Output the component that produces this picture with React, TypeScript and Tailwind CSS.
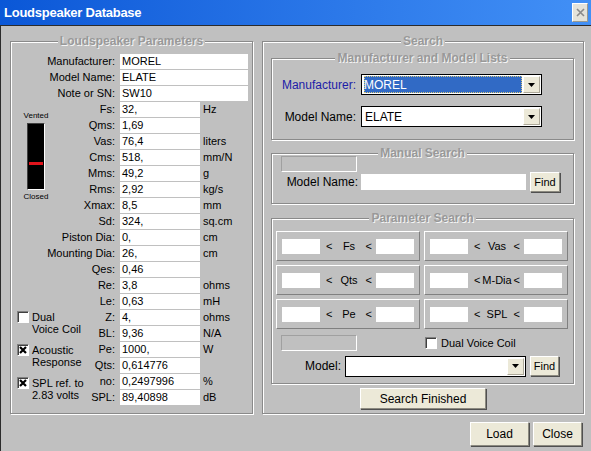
import React from "react";

const params: [string, string, string][] = [
  ["Fs:", "32,", "Hz"],
  ["Qms:", "1,69", ""],
  ["Vas:", "76,4", "liters"],
  ["Cms:", "518,", "mm/N"],
  ["Mms:", "49,2", "g"],
  ["Rms:", "2,92", "kg/s"],
  ["Xmax:", "8,5", "mm"],
  ["Sd:", "324,", "sq.cm"],
  ["Piston Dia:", "0,", "cm"],
  ["Mounting Dia:", "26,", "cm"],
  ["Qes:", "0,46", ""],
  ["Re:", "3,8", "ohms"],
  ["Le:", "0,63", "mH"],
  ["Z:", "4,", "ohms"],
  ["BL:", "9,36", "N/A"],
  ["Pe:", "1000,", "W"],
  ["Qts:", "0,614776", ""],
  ["no:", "0,2497996", "%"],
  ["SPL:", "89,40898", "dB"],
];

const topFields: [string, string][] = [
  ["Manufacturer:", "MOREL"],
  ["Model Name:", "ELATE"],
  ["Note or SN:", "SW10"],
];

function Group({
  title,
  className,
  children,
}: {
  title: string;
  className: string;
  children?: React.ReactNode;
}) {
  return (
    <div
      className={`relative border border-[#8a8a8a] shadow-[1px_1px_0_#fff,inset_1px_1px_0_#fff] ${className}`}
    >
      {/* legend sits on the top border */}
      <div className="absolute -top-[8px] left-0 right-0 flex justify-center">
        <span className="bg-[#c0c0c0] px-[2px] text-[12px] font-bold leading-[14px] text-[#999999] [text-shadow:1px_1px_0_#f4f4f4]">
          {title}
        </span>
      </div>
      {children}
    </div>
  );
}

function Btn({
  children,
  className,
}: {
  children: React.ReactNode;
  className: string;
}) {
  return (
    <button
      className={`flex items-center justify-center border border-t-white border-l-white border-b-[#8c8a80] border-r-[#8c8a80] bg-[#ece9d8] text-black shadow-[1px_1px_0_#505050] ${className}`}
    >
      {children}
    </button>
  );
}

function Check({ checked }: { checked?: boolean }) {
  return (
    <div className="flex h-[12px] w-[12px] shrink-0 items-center justify-center border border-t-[#808080] border-l-[#808080] border-b-white border-r-white bg-white shadow-[inset_1px_1px_0_#404040]">
      {checked && (
        <svg width="8" height="8" viewBox="0 0 8 8">
          <path d="M1 1 L7 7 M7 1 L1 7" stroke="#000" strokeWidth="2.2" />
        </svg>
      )}
    </div>
  );
}

function Arrow() {
  return (
    <div className="flex w-[17px] items-center justify-center border border-t-white border-l-white border-b-[#aca899] border-r-[#aca899] bg-[#ece9d8]">
      <svg width="7" height="4" viewBox="0 0 7 4">
        <path d="M0 0 H7 L3.5 4 Z" fill="#000" />
      </svg>
    </div>
  );
}

function Combo({ value, selected }: { value?: string; selected?: boolean }) {
  return (
    <div className="flex h-[21px] w-[181px] border border-black bg-white py-[1px] pl-[2px] pr-[1px]">
      {selected ? (
        <div className="mr-[1px] flex flex-1 items-center bg-[#316ac5] text-white outline-1 -outline-offset-1 outline-dotted outline-[#d9c77a]">
          {value}
        </div>
      ) : (
        <div className="flex flex-1 items-center pl-[1px]">{value}</div>
      )}
      <Arrow />
    </div>
  );
}

function Range({ label }: { label: string }) {
  return (
    <div className="flex h-[30px] w-[144px] items-center border border-t-white border-l-white border-b-[#808080] border-r-[#808080] px-[5px] text-[11px]">
      <div className="h-[15px] w-[38px] bg-white" />
      <div className="flex flex-1 justify-between pl-[6px] pr-[4px]">
        <span>&lt;</span>
        <span>{label}</span>
        <span>&lt;</span>
      </div>
      <div className="h-[15px] w-[38px] bg-white" />
    </div>
  );
}

function Sunken({ className }: { className: string }) {
  return (
    <div
      className={`h-[16px] w-[76px] border border-t-[#a0a0a0] border-l-[#a0a0a0] border-b-white border-r-white ${className}`}
    />
  );
}

export default function App() {
  return (
    <div className="h-[451px] w-[591px] overflow-hidden bg-[#c0c0c0] font-['Liberation_Sans',Arial,sans-serif] text-black">
      {/* Title bar */}
      <div className="flex h-[26px] items-center border-b border-[#2b2b2b] bg-linear-to-r from-[#0a57d7] to-[#4290f6] pl-[4px] pr-[3px]">
        <div className="text-[13px] font-bold tracking-[-0.25px] text-white">
          Loudspeaker Database
        </div>
        <div className="ml-auto flex h-[19px] w-[16px] items-center justify-center border border-t-white border-l-white border-b-[#9a9a90] border-r-[#9a9a90] bg-[#e4e3da]">
          <svg width="9" height="9" viewBox="0 0 9 9">
            <path d="M1 1 L8 8 M8 1 L1 8" stroke="#8a8a8a" strokeWidth="1.6" />
          </svg>
        </div>
      </div>

      {/* Body */}
      <div className="flex h-[425px] flex-col border-l border-[#2b2b2b] pl-[9px] pr-[7px] pt-[15px]">
        <div className="flex">
          {/* Loudspeaker Parameters */}
          <Group title="Loudspeaker Parameters" className="h-[373px] w-[243px]">
            <div className="flex flex-col pt-[12px] text-[11px]">
              {topFields.map(([label, value]) => (
                <div className="flex h-[16px]" key={label}>
                  <div className="flex w-[109px] justify-end whitespace-nowrap pr-[5px] leading-[15px]">
                    {label}
                  </div>
                  <div className="h-[15px] w-[128px] bg-white pl-[2px] leading-[15px]">
                    {value}
                  </div>
                </div>
              ))}

              <div className="flex">
                {/* vented indicator + checkboxes */}
                <div className="flex w-[42px] flex-col">
                  <div className="ml-[8px] mt-[9px] flex w-[34px] flex-col items-center">
                    <div className="text-[8px] leading-[10px]">Vented</div>
                    <div className="mt-[2px] h-[67px] w-[18px] border border-t-[#404040] border-l-[#404040] border-b-white border-r-white bg-black pt-[38px]">
                      <div className="mx-[1px] h-[3px] bg-[#e0141c]" />
                    </div>
                    <div className="mt-[2px] text-[8px] leading-[10px]">Closed</div>
                  </div>

                  <div className="mb-[5px] ml-[6px] mt-auto flex flex-col gap-[9px] whitespace-nowrap leading-[12px]">
                    <div className="flex items-start gap-[3px]">
                      <Check />
                      <div>
                        Dual
                        <br />
                        Voice Coil
                      </div>
                    </div>
                    <div className="flex items-start gap-[3px]">
                      <Check checked />
                      <div>
                        Acoustic
                        <br />
                        Response
                      </div>
                    </div>
                    <div className="flex items-start gap-[3px]">
                      <Check checked />
                      <div>
                        SPL ref. to
                        <br />
                        2.83 volts
                      </div>
                    </div>
                  </div>
                </div>

                {/* parameter rows */}
                <div className="flex flex-col">
                  {params.map(([label, value, unit]) => (
                    <div className="flex h-[16px]" key={label}>
                      <div className="flex w-[67px] justify-end whitespace-nowrap pr-[5px] leading-[15px]">
                        {label}
                      </div>
                      <div className="h-[15px] w-[80px] bg-white pl-[2px] leading-[15px]">
                        {value}
                      </div>
                      <div className="pl-[3px] leading-[15px]">{unit}</div>
                    </div>
                  ))}
                </div>
              </div>
            </div>
          </Group>

          {/* Search */}
          <Group title="Search" className="ml-[9px] h-[373px] w-[322px]">
            <div className="flex flex-col px-[8px] pt-[16px] text-[12px]">
              <Group title="Manufacturer and Model Lists" className="h-[82px] w-[303px]">
                <div className="flex flex-col gap-[11px] pt-[15px]">
                  <div className="flex items-center">
                    <div className="w-[89px] pr-[5px] text-right text-[#1c1ca8]">
                      Manufacturer:
                    </div>
                    <Combo value="MOREL" selected />
                  </div>
                  <div className="flex items-center">
                    <div className="w-[89px] pr-[5px] text-right">Model Name:</div>
                    <Combo value="ELATE" />
                  </div>
                </div>
              </Group>

              <Group title="Manual Search" className="mt-[13px] h-[51px] w-[303px]">
                <div className="flex flex-col pt-[2px]">
                  <Sunken className="ml-[9px]" />
                  <div className="flex items-center">
                    <div className="w-[89px] pr-[3px] text-right">Model Name:</div>
                    <div className="h-[16px] w-[165px] bg-white" />
                    <Btn className="ml-[4px] h-[20px] w-[30px] text-[11px]">Find</Btn>
                  </div>
                </div>
              </Group>

              <Group title="Parameter Search" className="mt-[14px] h-[166px] w-[303px]">
                <div className="flex flex-col pl-[4px] pt-[12px]">
                  <div className="grid grid-cols-[144px_144px] gap-[4px]">
                    <Range label="Fs" />
                    <Range label="Vas" />
                    <Range label="Qts" />
                    <Range label="M-Dia" />
                    <Range label="Pe" />
                    <Range label="SPL" />
                  </div>
                  <div className="mt-[6px] flex items-center">
                    <Sunken className="ml-[5px]" />
                    <div className="ml-[68px] flex items-center gap-[4px] text-[11px]">
                      <Check />
                      Dual Voice Coil
                    </div>
                  </div>
                  <div className="mt-[4px] flex items-center">
                    <div className="w-[69px] pr-[4px] text-right">Model:</div>
                    <Combo />
                    <Btn className="ml-[4px] h-[20px] w-[29px] text-[11px]">Find</Btn>
                  </div>
                </div>
              </Group>

              <div className="mt-[4px] flex justify-center">
                <Btn className="h-[21px] w-[126px]">Search Finished</Btn>
              </div>
            </div>
          </Group>
        </div>

        {/* Dialog buttons */}
        <div className="mt-[8px] flex justify-end gap-[4px] pr-[2px] text-[12px]">
          <Btn className="h-[24px] w-[59px]">Load</Btn>
          <Btn className="h-[24px] w-[49px]">Close</Btn>
        </div>
      </div>
    </div>
  );
}
